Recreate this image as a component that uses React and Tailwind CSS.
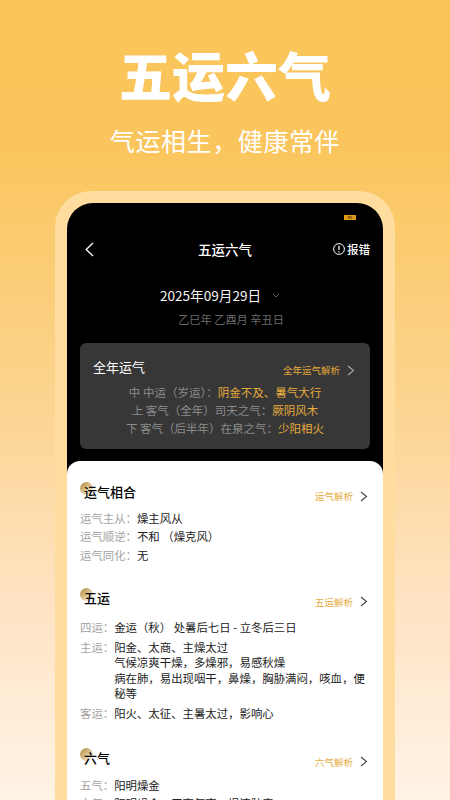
import React from 'react';

const cjk = { fontFamily: '"Noto Sans CJK SC", sans-serif' };

const Chevron = ({ className = '' }) => (
  <svg width="8" height="11" viewBox="0 0 8 11" fill="none" stroke="currentColor" strokeWidth="1.1" className={className}>
    <path d="M1 1l5.5 4.5L1 10" />
  </svg>
);

const SectionHead = ({ title, link }) => (
  <div className="flex items-end justify-between">
    <div className="relative pl-[4px]">
      <div className="absolute left-0 top-[-1px] mt-[5px] w-[13px] h-[13px] rounded-full bg-gradient-to-br from-[#b08a3e] via-[#d9c08a] to-[#ffffff]" />
      <span className="relative text-[13px] leading-[20px] font-medium text-black">{title}</span>
    </div>
    <div className="flex items-center gap-[7px] mb-[-1px]">
      <span className="text-[9.5px] leading-[14px] text-[#e6ab3c]">{link}</span>
      <Chevron className="text-[#444]" />
    </div>
  </div>
);

const Row = ({ label, children }) => (
  <div className="flex text-[11.4px] leading-[15.3px]">
    <span className="flex-none text-[#a3a3a3]">{label}</span>
    <div className="text-[#222]">{children}</div>
  </div>
);

const ChevronDownSmall = () => (
  <svg width="8" height="5" viewBox="0 0 8 5" fill="none" stroke="#666" strokeWidth="0.9" className="ml-[11px]">
    <path d="M1 1l3 3 3-3" />
  </svg>
);

const App = () => {
  return (
    <div style={cjk} className="h-[800px] w-[450px] overflow-hidden flex flex-col items-center bg-[linear-gradient(180deg,#fac55a_0%,#fac55c_18%,#fbd48f_50%,#ffe3c3_75%,#fff3e6_100%)]">
      <h1 className="mt-[36px] text-[53px] leading-[76px] font-black text-white">五运六气</h1>
      <p className="mt-[10px] text-[25px] leading-[36px] tracking-[0.6px] text-white">气运相生，健康常伴</p>

      <div className="mt-[33px] w-[340px] flex-1 rounded-t-[36px] bg-[#ffdd9f] pt-[12px] px-[12px]">
        <div className="h-full rounded-t-[26px] bg-black flex flex-col">
          <div className="flex justify-end pt-[12px] pr-[27px]">
            <div className="w-[12px] h-[5px] bg-[#e09a1a] text-[4px] leading-[5px] text-black text-center">95</div>
          </div>
          <div className="relative mt-[19px] h-[20px] flex items-center justify-center text-white">
            <svg width="9" height="15" viewBox="0 0 9 15" fill="none" stroke="currentColor" strokeWidth="1.3" className="absolute left-[18px]">
              <path d="M8 1L1.2 7.5 8 14" />
            </svg>
            <span className="text-[13.5px] font-medium">五运六气</span>
            <div className="absolute right-[13px] flex items-center gap-[2px]">
              <svg width="12" height="12" viewBox="0 0 12 12" fill="none" stroke="currentColor">
                <circle cx="6" cy="6" r="5.4" strokeWidth="1" />
                <path d="M6 2.8v4M6 8.2v1.2" strokeWidth="1.3" />
              </svg>
              <span className="text-[11.5px] leading-[20px] font-medium">报错</span>
            </div>
          </div>

          <div className="mt-[26px] flex items-center justify-center pr-[10px] text-white">
            <span className="text-[13.6px] leading-[20px] text-[#f5f5f5]">2025年09月29日</span>
            <ChevronDownSmall />
          </div>
          <p className="mt-[6px] pl-[12px] text-center text-[11.2px] leading-[16px] text-[#6b6b6b]">乙巳年 乙酉月 辛丑日</p>

          <div className="mt-[16px] mx-[13px] h-[106px] rounded-[6px] bg-[#373737] pl-[13px] pr-[15px] pt-[13px]">
            <div className="flex items-center justify-between">
              <span className="text-[13px] leading-[19px] text-white">全年运气</span>
              <div className="flex items-center gap-[7px] mt-[7px]">
                <span className="text-[9.5px] leading-[14px] text-[#e6ab3c]">全年运气解析</span>
                <Chevron className="text-[#aaa]" />
              </div>
            </div>
            <div className="mt-[6px] ml-[2px] text-center text-[11.5px] leading-[18px] text-[#8c8c8c]">
              <p>中 中运（岁运）：<span className="text-[#e6ab3c]">阴金不及、暑气大行</span></p>
              <p>上 客气（全年）司天之气：<span className="text-[#e6ab3c]">厥阴风木</span></p>
              <p>下 客气（后半年）在泉之气：<span className="text-[#e6ab3c]">少阳相火</span></p>
            </div>
          </div>

          <div className="mt-[12px] flex-1 rounded-t-[13px] bg-white pl-[13px] pr-[15px] pt-[17px]">
            <SectionHead title="运气相合" link="运气解析" />
            <div className="mt-[9px] space-y-[3px]">
              <Row label="运气主从：">燥主风从</Row>
              <Row label="运气顺逆：">不和 （燥克风）</Row>
              <Row label="运气同化：">无</Row>
            </div>

            <div className="mt-[21px]">
              <SectionHead title="五运" link="五运解析" />
            </div>
            <div className="mt-[12px] space-y-[5px]">
              <Row label="四运：">金运（秋） 处暑后七日 - 立冬后三日</Row>
              <Row label="主运：">
                <p>阳金、太商、主燥太过</p>
                <p>气候凉爽干燥，多燥邪，易感秋燥</p>
                <p>病在肺，易出现咽干，鼻燥，胸胁满闷，咳血，便秘等</p>
              </Row>
              <Row label="客运：">阳火、太征、主暑太过，影响心</Row>
            </div>

            <div className="mt-[22px]">
              <SectionHead title="六气" link="六气解析" />
            </div>
            <div className="mt-[10px] space-y-[3px]">
              <Row label="五气：">阳明燥金</Row>
              <Row label="六气：">阳明燥金，天高气爽，提清肺素</Row>
            </div>
          </div>
        </div>
      </div>
    </div>
  );
};

export default App;
